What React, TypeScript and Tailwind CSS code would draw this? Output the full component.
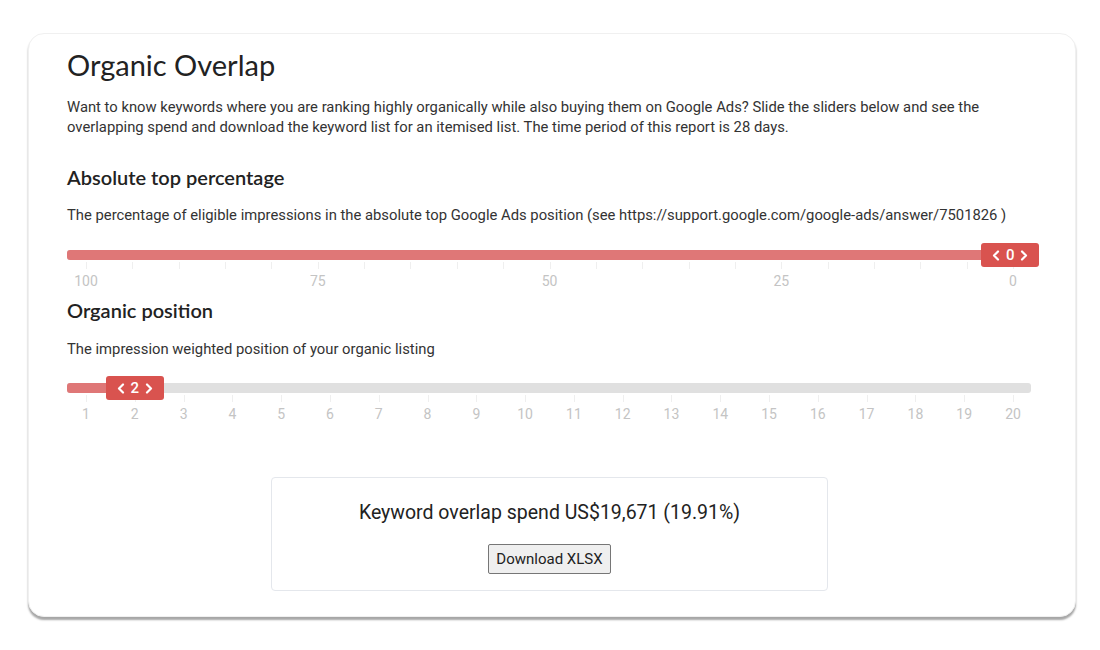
import React from "react";

const heading = "font-['Lato','Noto_Sans',sans-serif]";
const body = "font-['Roboto','Liberation_Sans',sans-serif]";

function Chevrons({ value }: { value: number }) {
  return (
    <div className={`${body} flex items-center justify-center gap-[6px] text-white text-[15px] font-medium`}>
      <svg width="8" height="11" viewBox="0 0 8 11" fill="none">
        <path d="M6 1.5 L2 5.5 L6 9.5" stroke="white" strokeWidth="2.2" strokeLinecap="round" strokeLinejoin="round" />
      </svg>
      <span className="leading-none">{value}</span>
      <svg width="8" height="11" viewBox="0 0 8 11" fill="none">
        <path d="M2 1.5 L6 5.5 L2 9.5" stroke="white" strokeWidth="2.2" strokeLinecap="round" strokeLinejoin="round" />
      </svg>
    </div>
  );
}

type Label = { pct: number; text: string };

function Slider({
  ticks,
  labels,
  handlePct,
  fill,
  value,
}: {
  ticks: number;
  labels: Label[];
  handlePct: number;
  fill: string;
  value: number;
}) {
  return (
    <div className="w-[964px]">
      <div className="relative z-10 h-[10px] rounded-[3px] bg-[#e0e0e0]">
        <div className={`absolute left-0 top-0 h-[10px] rounded-[3px] bg-[#df7777] ${fill}`} />
        <div className="absolute inset-y-0 left-[19px] right-[18px]">
          <div
            className="absolute top-[-7px] h-[24px] w-[58px] -translate-x-1/2 rounded-[3px] bg-[#d9534f] flex items-center justify-center"
            style={{ left: `${handlePct}%` }}
          >
            <Chevrons value={value} />
          </div>
        </div>
      </div>
      <div className="relative ml-[19px] mr-[18px] h-[10px]">
        {Array.from({ length: ticks }).map((_, i) => (
          <div
            key={i}
            className="absolute top-[2px] h-[7px] w-px bg-[#efefef]"
            style={{ left: `${(i / (ticks - 1)) * 100}%` }}
          />
        ))}
      </div>
      <div className={`${body} relative ml-[19px] mr-[18px] h-[22px] text-[14px] text-[#c4c4c4]`}>
        {labels.map((l) => (
          <span
            key={l.text}
            className="absolute top-[2px] -translate-x-1/2 leading-[18px]"
            style={{ left: `${l.pct}%` }}
          >
            {l.text}
          </span>
        ))}
      </div>
    </div>
  );
}

export default function App() {
  const topLabels = [100, 75, 50, 25, 0].map((v, i) => ({ pct: i * 25, text: String(v) }));
  const posLabels = Array.from({ length: 20 }).map((_, i) => ({ pct: (i / 19) * 100, text: String(i + 1) }));

  return (
    <div className="w-[1100px] h-[650px] bg-white pt-[33px] pl-[28px]">
      <div className="w-[1048px] h-[584px] rounded-[16px] bg-white border border-[#f0f0f0] shadow-[0_3px_2px_rgba(0,0,0,0.35)] pl-[38px] pt-[13px]">
        <h1 className={`${heading} text-[29px] leading-[36px] text-[#222]`}>Organic Overlap</h1>
        <p className={`${body} mt-[14px] w-[960px] text-[14.8px] leading-[20px] text-[#333]`}>
          Want to know keywords where you are ranking highly organically while also buying them on Google Ads? Slide the sliders below and see the overlapping spend and download the keyword list for an itemised list. The time period of this report is 28 days.
        </p>
        <h2 className={`${heading} mt-[28px] text-[20px] leading-[24px] font-semibold text-[#222]`}>
          Absolute top percentage
        </h2>
        <p className={`${body} mt-[16px] text-[14.8px] leading-[20px] text-[#333]`}>
          The percentage of eligible impressions in the absolute top Google Ads position (see https://support.google.com/google-ads/answer/7501826 )
        </p>
        <div className="mt-[25px]">
          <Slider ticks={21} labels={topLabels} handlePct={99.7} fill="w-full" value={0} />
        </div>
        <h2 className={`${heading} mt-[6px] text-[20px] leading-[24px] font-semibold text-[#222]`}>
          Organic position
        </h2>
        <p className={`${body} mt-[17px] text-[14.8px] leading-[20px] text-[#333]`}>
          The impression weighted position of your organic listing
        </p>
        <div className="mt-[24px]">
          <Slider ticks={20} labels={posLabels} handlePct={100 / 19} fill="w-[44px]" value={2} />
        </div>
        <div className={`${body} mt-[52px] ml-[204px] w-[557px] h-[114px] rounded-[4px] border border-[#e4e7ec] flex flex-col items-center`}>
          <div className="mt-[22px] text-[19.5px] leading-[26px] text-[#222]">
            Keyword overlap spend US$19,671 (19.91%)
          </div>
          <button className="mt-[18px] h-[30px] px-[7px] text-[15px] text-[#222] bg-[#efefef] border border-[#767676] rounded-[2px]">
            Download XLSX
          </button>
        </div>
      </div>
    </div>
  );
}
